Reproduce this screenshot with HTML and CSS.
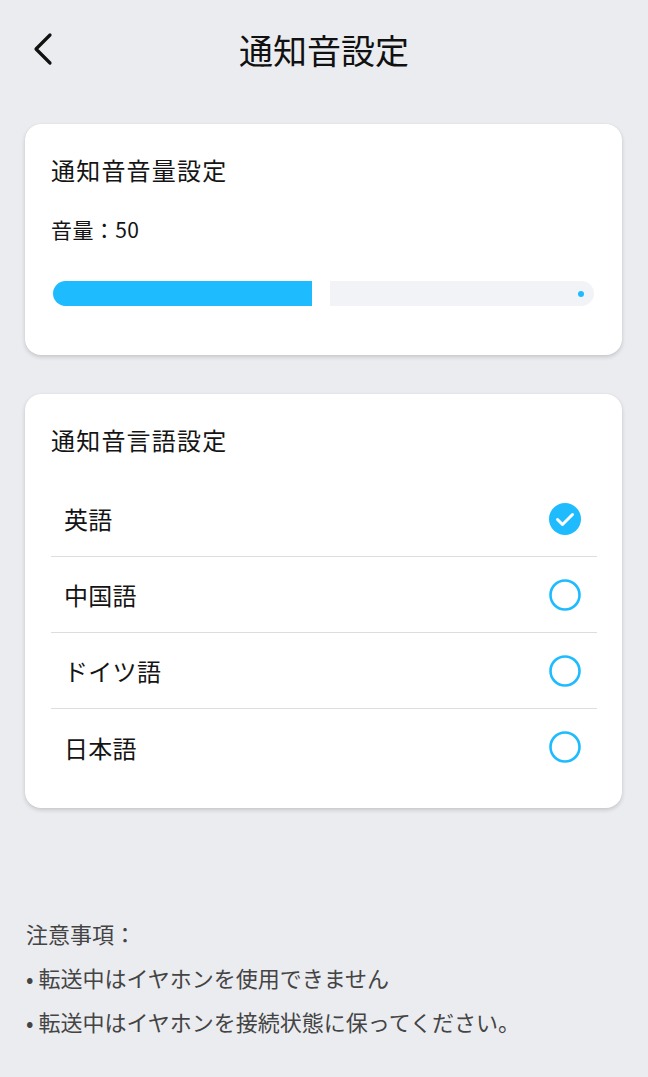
FILE: index.html
```html
<!DOCTYPE html>
<html lang="ja">
<head>
<meta charset="utf-8">
<title>通知音設定</title>
<link rel="stylesheet" href="styles.css">
</head>
<body>
<header class="header">
  <button class="back" aria-label="戻る">
    <svg width="24" height="34" viewBox="0 0 24 34"><path d="M19 3 L5 17 L19 31" fill="none" stroke="#111" stroke-width="3.2" stroke-linecap="round" stroke-linejoin="round"/></svg>
  </button>
  <h1 class="title">通知音設定</h1>
</header>

<section class="card volume">
  <h2 class="card-title">通知音音量設定</h2>
  <div class="vol-label">音量：50</div>
  <div class="slider">
    <div class="fill"></div>
    <div class="track"><span class="dot"></span></div>
  </div>
</section>

<section class="card lang">
  <h2 class="card-title">通知音言語設定</h2>
  <ul class="list">
    <li class="row"><span>英語</span>
      <svg class="radio" width="34" height="34" viewBox="0 0 34 34"><circle cx="17" cy="17" r="16" fill="#1ebcfe"/><path d="M9.5 17.5 L14.5 22.5 L24.5 12.5" fill="none" stroke="#fff" stroke-width="3" stroke-linecap="round" stroke-linejoin="round"/></svg>
    </li>
    <li class="row"><span>中国語</span>
      <svg class="radio" width="34" height="34" viewBox="0 0 34 34"><circle cx="17" cy="17" r="14.5" fill="none" stroke="#1ebcfe" stroke-width="2.6"/></svg>
    </li>
    <li class="row"><span>ドイツ語</span>
      <svg class="radio" width="34" height="34" viewBox="0 0 34 34"><circle cx="17" cy="17" r="14.5" fill="none" stroke="#1ebcfe" stroke-width="2.6"/></svg>
    </li>
    <li class="row"><span>日本語</span>
      <svg class="radio" width="34" height="34" viewBox="0 0 34 34"><circle cx="17" cy="17" r="14.5" fill="none" stroke="#1ebcfe" stroke-width="2.6"/></svg>
    </li>
  </ul>
</section>

<section class="notes">
  <p>注意事項：</p>
  <p>• 転送中はイヤホンを使用できません</p>
  <p>• 転送中はイヤホンを接続状態に保ってください。</p>
</section>
</body>
</html>
```
FILE: styles.css
```css
* { box-sizing: border-box; }
html, body { margin: 0; padding: 0; }
body {
  background: #ebecf0;
  font-family: "Noto Sans CJK JP", "Noto Sans", sans-serif;
  color: #141414;
  width: 648px;
  min-height: 1077px;
}
.header {
  height: 100px;
  display: flex;
  align-items: center;
  justify-content: center;
  position: relative;
}
.back {
  position: absolute;
  left: 31px;
  top: 32px;
  border: 0;
  background: none;
  padding: 0;
  display: block;
}
.back svg { display: block; }
.title {
  margin: 0;
  font-size: 34px;
  font-weight: 400;
  line-height: 40px;
  color: #111;
}
.card {
  background: #fff;
  margin: 0 26px 0 25px;
  border-radius: 16px;
  box-shadow: 0 2px 4px rgba(0,0,0,0.16), 0 0 1px rgba(0,0,0,0.08);
}
.volume {
  margin-top: 24px;
  padding: 29px 25px 49px 26px;
}
.card-title {
  margin: 0;
  font-size: 24px;
  font-weight: 400;
  line-height: 34px;
  letter-spacing: 1.2px;
}
.vol-label {
  margin-top: 27px;
  font-size: 21px;
  line-height: 30px;
  letter-spacing: 0.4px;
}
.slider {
  margin: 37px 3px 0 2px;
  display: flex;
  gap: 18px;
  height: 25px;
}
.fill {
  width: 259px;
  background: #1ebcfe;
  border-radius: 12.5px 0 0 12.5px;
}
.track {
  flex: 1;
  background: #f2f3f6;
  border-radius: 0 12.5px 12.5px 0;
  display: flex;
  align-items: center;
  justify-content: flex-end;
  padding-right: 10px;
}
.dot {
  width: 6px;
  height: 6px;
  border-radius: 50%;
  background: #1ebcfe;
}
.lang {
  margin-top: 39px;
  padding: 29px 25px 23px 26px;
}
.list {
  list-style: none;
  margin: 24px 0 0;
  padding: 0;
}
.row {
  height: 76px;
  display: flex;
  align-items: center;
  justify-content: space-between;
  padding: 0 15px 0 13px;
  font-size: 24px;
  letter-spacing: 0.3px;
  border-bottom: 1.5px solid #dcdde1;
}
.row:last-child { border-bottom: 0; }
.radio { display: block; }
.notes {
  margin-top: 103px;
  padding-left: 26px;
  color: #444;
  font-size: 22px;
}
.notes p {
  margin: 0;
  line-height: 44px;
}
```
